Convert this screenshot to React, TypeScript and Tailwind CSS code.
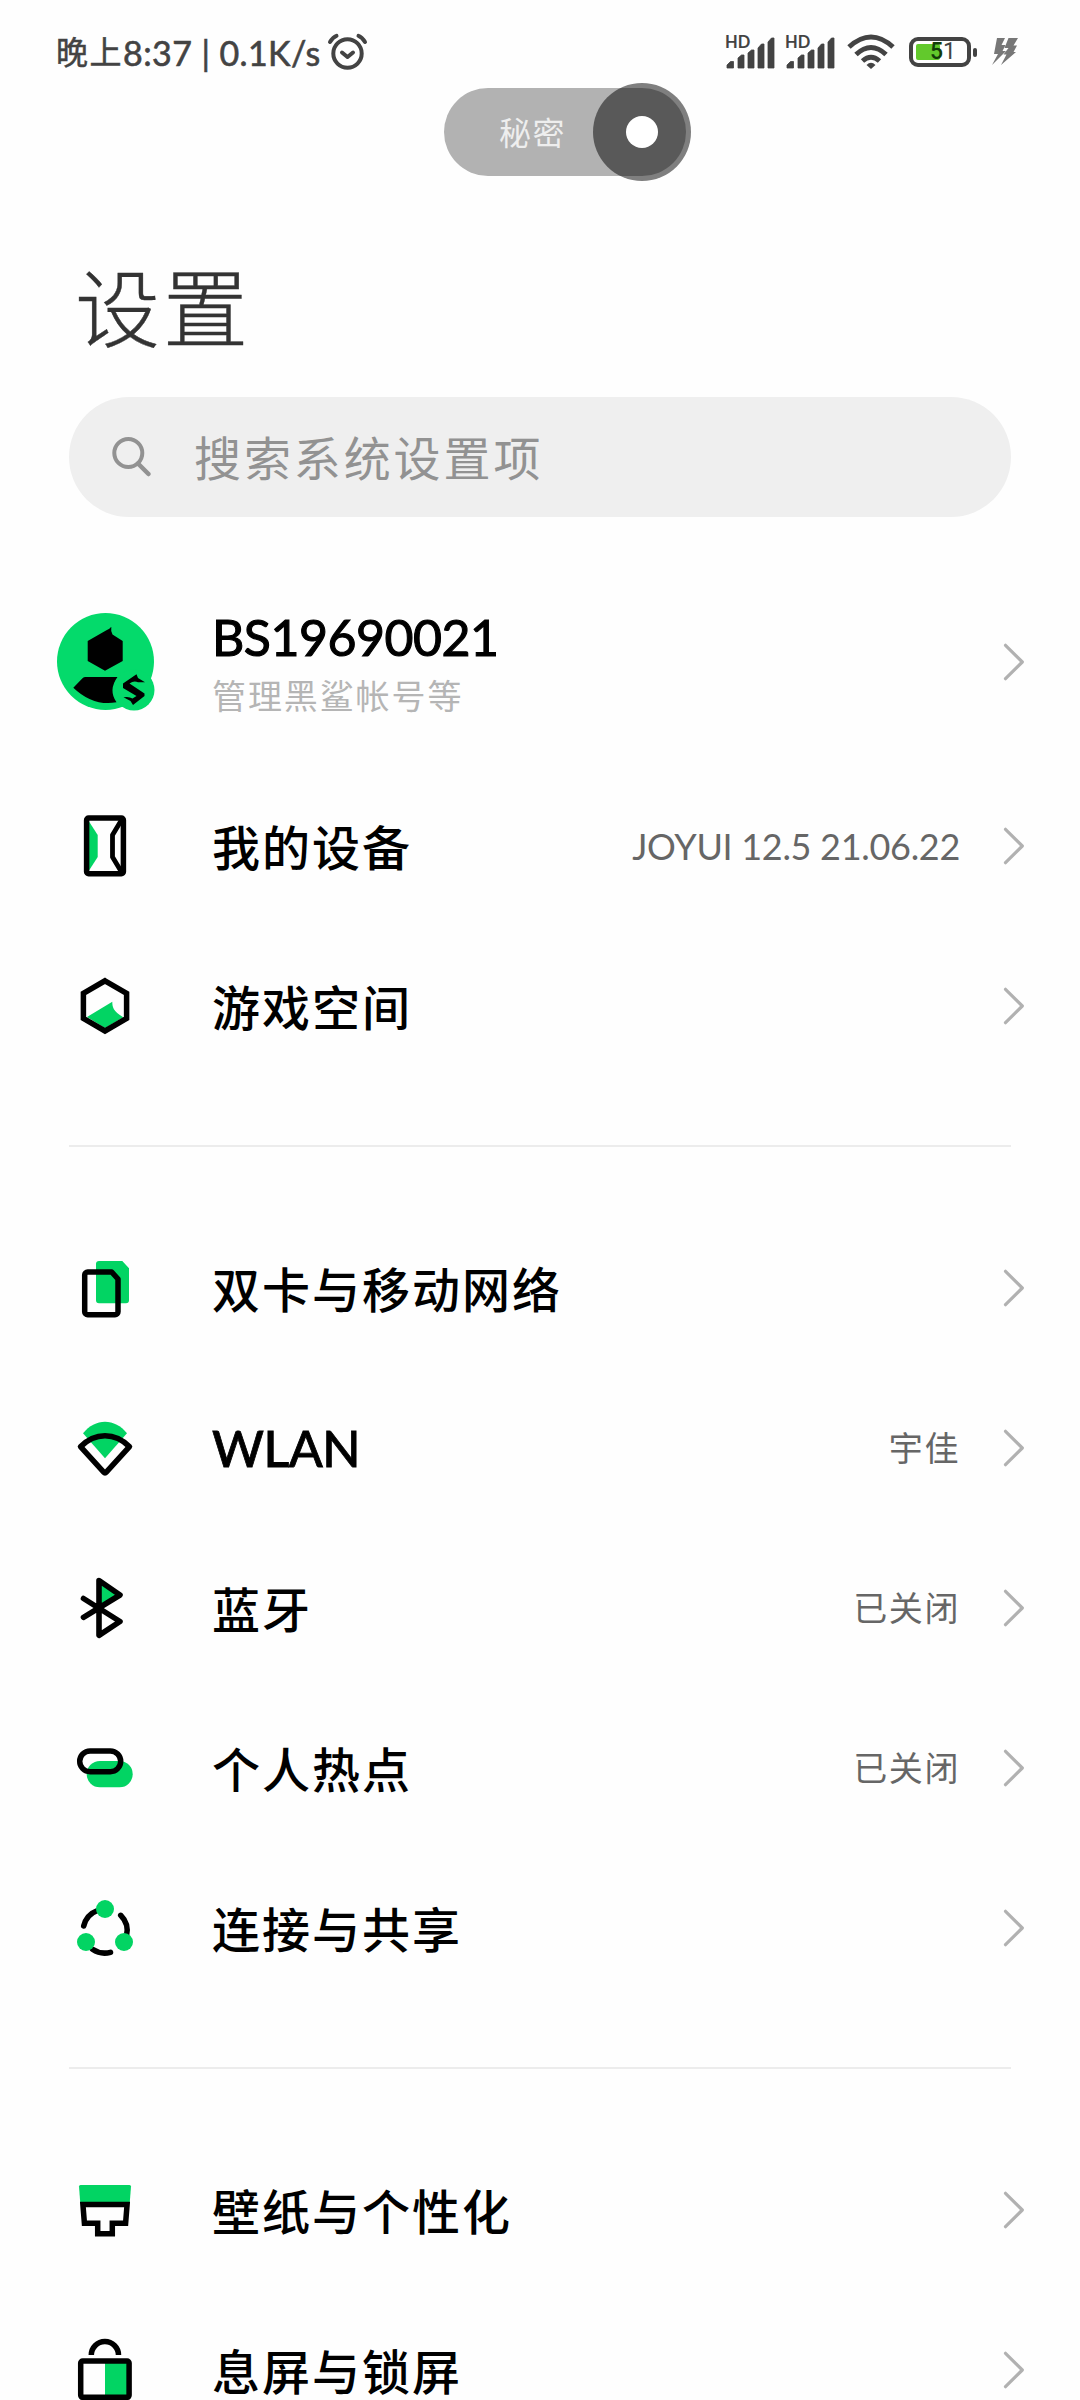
import React from "react";

const GREEN = "#02d463";

function Icon({ children }: { children: React.ReactNode }) {
  return (
    <svg
      viewBox="0 0 64 64"
      className="h-16 w-16 shrink-0"
      fill="none"
      stroke="#000"
      strokeWidth="5.5"
      strokeLinejoin="round"
    >
      {children}
    </svg>
  );
}

const DeviceIcon = () => (
  <Icon>
    <path d="M16 7.5L24.7 21V43L16 56.5Z" fill={GREEN} stroke="none" />
    <path d="M48.5 6L39.5 21V43L48.5 58" strokeWidth="4.8" />
    <rect x="13.6" y="4.1" width="36.8" height="55.6" rx="2" />
  </Icon>
);

const GameIcon = () => (
  <Icon>
    <path d="M14 43L39.3 27.7C39.3 33 40 37 50.3 43.3L32 54Z" fill={GREEN} stroke="none" />
    <path d="M32 6.8L53.6 19.3V44.5L32 57L10.4 44.5V19.3Z" strokeLinejoin="miter" />
  </Icon>
);

const SimIcon = () => (
  <Icon>
    <path
      d="M26 5H49.3L56 12.3V44.3a3 3 0 0 1-3 3H26a3 3 0 0 1-3-3V8a3 3 0 0 1 3-3Z"
      fill={GREEN}
      stroke="none"
    />
    <path d="M14.7 16H38.7L45 23V55.7a3 3 0 0 1-3 3H14.7a3 3 0 0 1-3-3V19a3 3 0 0 1 3-3Z" />
  </Icon>
);

const WlanIcon = () => (
  <Icon>
    <path d="M10 17.3C22 1.8 42 1.8 54 17.3L32 42.3Z" fill={GREEN} stroke="none" />
    <path d="M7.5 30.7C22 16 42 16 56.5 30.7L33.3 56.2Q32 57.6 30.7 56.2Z" />
  </Icon>
);

const BluetoothIcon = () => (
  <Icon>
    <path d="M26 5L46.7 19.3L26 31.8Z" fill={GREEN} stroke="none" />
    <path
      d="M10.5 22.5L47 45.5L26 59.3V4.5L47 19L10.5 41.3"
      strokeLinecap="round"
      strokeWidth="5.6"
    />
  </Icon>
);

const HotspotIcon = () => (
  <Icon>
    <rect x="13.7" y="25" width="46" height="26.3" rx="13.15" fill={GREEN} stroke="none" />
    <rect x="6.7" y="15" width="41" height="20.7" rx="10.35" />
  </Icon>
);

const ShareIcon = () => (
  <Icon>
    <g strokeLinecap="round">
      <path d="M10.7 30A22 22 0 0 1 24.5 14.5" />
      <path d="M47.7 19.3A22 22 0 0 1 53.5 40" />
      <path d="M19.5 53.3A22 22 0 0 0 37.5 56.3" />
    </g>
    <g fill={GREEN} stroke="none">
      <circle cx="32" cy="13" r="9" />
      <circle cx="13" cy="46" r="9" />
      <circle cx="51" cy="46" r="9" />
    </g>
  </Icon>
);

const WallpaperIcon = () => (
  <Icon>
    <path d="M7.5 7H56.5Q58 7 58 8.5L56.8 24H7.2L6 8.5Q6 7 7.5 7Z" fill={GREEN} stroke="none" />
    <path
      d="M9.9 26.4H54.1L52.6 45.3H39.3V55.7H24.7V45.3H11.4Z"
      strokeLinejoin="miter"
    />
  </Icon>
);

const LockIcon = () => (
  <Icon>
    <path d="M18.3 17A13.6 13.4 0 0 1 45.5 17" />
    <path d="M32 23H56V59H32Z" fill={GREEN} stroke="none" />
    <rect x="7.7" y="23" width="48.4" height="36.3" rx="2" />
  </Icon>
);

const Avatar = () => (
  <svg viewBox="0 0 98 98" className="h-[98px] w-[98px] shrink-0">
    <circle cx="48.5" cy="48.5" r="48.5" fill="#04da6b" />
    <path
      d="M30.7 28L49 17.6Q53 15.6 54.3 13.7Q53.6 18 55.5 21.5L65.7 28V48L48 57.7L30.7 48Z"
      fill="#000"
    />
    <path
      d="M16.3 74.7L25.5 65.2Q26.8 64 28.5 64H60.5Q51 77 59.5 89.3Q36 93.5 16.3 74.7Z"
      fill="#000"
    />
    <circle cx="77" cy="77" r="20.5" fill="#04da6b" />
    <path
      d="M66 70.5L79.5 61.3L81 65L88 69.3L81 69.3Q77 67 72.5 70.5L87.500 80.5V83L76 92L73.500 88L66.500 84.300Q72 83.300 75.500 85.500L79.500 83L66 75Z"
      fill="#000"
    />
  </svg>
);

const Chevron = () => (
  <svg viewBox="0 0 22 40" className="ml-[43px] h-10 w-[22px] shrink-0" fill="none">
    <path
      d="M2.5 3.3L19.3 20L2.5 36.7"
      stroke="#b1b1b1"
      strokeWidth="3.2"
      strokeLinecap="round"
      strokeLinejoin="round"
    />
  </svg>
);

type RowProps = {
  icon: React.ReactNode;
  label: string;
  value?: string;
  labelClass?: string;
  valueClass?: string;
};

function Row({ icon, label, value, labelClass, valueClass }: RowProps) {
  return (
    <div className="flex h-40 items-center pr-[55px] pl-[73px]">
      {icon}
      <span
        className={`ml-[75px] grow leading-[60px] font-medium whitespace-nowrap text-black ${labelClass ?? "pt-[3px] text-[48px] tracking-[2px]"}`}
      >
        {label}
      </span>
      {value && (
        <span className={`leading-10 whitespace-nowrap text-[#666] ${valueClass ?? "text-[34px] tracking-[1.6px]"}`}>
          {value}
        </span>
      )}
      <Chevron />
    </div>
  );
}

const Divider = () => <div className="mx-[69px] mt-[59px] mb-[61px] h-[2px] bg-[#ececec]" />;

const Signal = () => (
  <div className="relative h-[34px] w-[50px]">
    <svg viewBox="0 0 50 34" className="h-[34px] w-[50px]" fill="#434343">
      <path
        d="M2 32V29L5.500 25.500H8.500V32ZM13 32V22L16.500 19H19V32ZM23 32V17L26.500 14H29V32ZM33 32V12L36.500 8H39V32ZM43 32V6L46.500 2H49V32Z"
        stroke="#434343"
        strokeWidth="0.8"
        strokeLinejoin="round"
      />
    </svg>
    <span className="absolute -top-[4px] left-0 text-[16.500px] leading-5 font-bold">HD</span>
  </div>
);

function StatusBar() {
  return (
    <div className="flex h-[83px] items-start pt-[31px] pl-[56px] text-[#434343]">
      <div className="flex h-[42px] w-[270px] items-center whitespace-nowrap">
        <span className="text-[32px] tracking-[1.500px] [-webkit-text-stroke:0.5px_#434343]">晚上</span>
        <span className="text-[34px] tracking-[0.400px] [-webkit-text-stroke:0.6px_#434343]">
          8:37 | 0.1K/s
        </span>
      </div>
      <svg viewBox="0 0 42 42" className="ml-[1px] h-[42px] w-[42px]" fill="none" stroke="#434343" strokeWidth="4" strokeLinecap="round" strokeLinejoin="round">
        <circle cx="20.5" cy="22.5" r="14.2" />
        <path d="M15 21.5L20.5 26L26 21.5" />
        <path d="M3 11Q6 6 9.500 4.800M38 11Q35 6 31.500 4.800" />
      </svg>
      <div className="ml-[356px] flex items-start">
        <div className="pt-[5px]">
          <Signal />
        </div>
        <div className="ml-[10px] pt-[5px]">
          <Signal />
        </div>
        <svg viewBox="0 0 48 36" className="ml-[12px] mt-[3px] h-9 w-12" fill="none" stroke="#434343" strokeWidth="5">
          <path d="M2 13Q24 -7 46 13" />
          <path d="M9 20.500Q24 6.500 39 20.500" />
          <path d="M15.500 27Q24 19.500 32.500 27" />
          <path d="M19.500 31Q24 26.500 28.500 31L24 35Z" fill="#434343" stroke="none" />
        </svg>
        <div className="ml-[14px] mt-[6px] flex items-center">
          <div className="relative h-[30px] w-[62px] rounded-[9px] border-4 border-[#434343]">
            <div className="absolute top-[3px] left-[3px] h-4 w-6 rounded-[2px] bg-[#62c92c]" />
            <div className="absolute -top-px left-[17px] font-[Roboto,sans-serif] text-[23px] leading-6">
              <span className="font-medium text-[#123c08]">5</span>1
            </div>
          </div>
          <div className="ml-[2px] h-[9px] w-1 rounded-[2px] bg-[#434343]" />
        </div>
        <svg viewBox="0 0 28 30" className="ml-[14px] mt-[6px] h-[30px] w-7" fill="#777">
          <path d="M6 1H14L10.500 8H14.500L11.500 14H15L1 28L7 17H3Z" />
          <path d="M17.500 1H27L22.500 8.500H26L22.500 15H25L10 28L15.500 17.500H12.500L17.500 11H13.500Z" />
        </svg>
      </div>
    </div>
  );
}

export default function App() {
  return (
    <div className="h-[2400px] w-[1080px] overflow-hidden bg-[#fefefe] font-[Lato,'Noto_Sans_CJK_SC',sans-serif]">
      <StatusBar />

      <div className="relative ml-[444px] flex h-[98px] w-[247px] items-center">
        <div className="flex h-[88px] w-[242px] items-center rounded-full bg-[#b2b2b2] pt-px pl-[55px] text-[32px] tracking-[1.500px] text-[#eeeeee]">
          秘密
        </div>
        <div className="absolute top-0 right-0 flex h-[98px] w-[98px] items-center justify-center rounded-full bg-black/50">
          <div className="h-8 w-8 rounded-full bg-white" />
        </div>
      </div>

      <h1 className="mt-[77px] ml-[75px] h-[100px] text-[85px] leading-[100px] font-light tracking-[3px] text-[#333] [-webkit-text-stroke:0.4px_#333]">
        设置
      </h1>

      <div className="mx-[69px] mt-[39px] flex h-[120px] items-center rounded-full bg-[#efefef] text-[#929292]">
        <svg viewBox="0 0 42 42" className="ml-[43px] h-[42px] w-[42px]" fill="none" stroke="#929292" strokeWidth="4">
          <circle cx="16.300" cy="17" r="14" />
          <path d="M26 27.500L36.500 38" strokeLinecap="round" strokeWidth="4.500" />
        </svg>
        <span className="ml-10 pt-[2px] text-[47px] leading-[60px] tracking-[2.900px]">搜索系统设置项</span>
      </div>

      <div className="mt-[65px] flex h-40 items-center pr-[55px] pl-[57px]">
        <Avatar />
        <div className="ml-[57px] grow">
          <div className="h-[60px] text-[50px] leading-[54px] tracking-[-0.500px] text-black [-webkit-text-stroke:1.100px_#000]">
            BS19690021
          </div>
          <div className="h-[44px] text-[34px] leading-[52px] tracking-[1.900px] text-[#b5b5b5]">
            管理黑鲨帐号等
          </div>
        </div>
        <Chevron />
      </div>

      <div className="mt-[24px]">
        <Row
          icon={<DeviceIcon />}
          label="我的设备"
          value="JOYUI 12.5 21.06.22"
          valueClass="text-[36px] tracking-[-0.300px]"
        />
        <Row icon={<GameIcon />} label="游戏空间" />
      </div>
      <Divider />
      <Row icon={<SimIcon />} label="双卡与移动网络" />
      <Row
        icon={<WlanIcon />}
        label="WLAN"
        value="宇佳"
        labelClass="text-[50px] tracking-[-0.500px] [-webkit-text-stroke:0.800px_#000]"
      />
      <Row icon={<BluetoothIcon />} label="蓝牙" value="已关闭" />
      <Row icon={<HotspotIcon />} label="个人热点" value="已关闭" />
      <Row icon={<ShareIcon />} label="连接与共享" />
      <Divider />
      <Row icon={<WallpaperIcon />} label="壁纸与个性化" />
      <Row icon={<LockIcon />} label="息屏与锁屏" />
    </div>
  );
}
